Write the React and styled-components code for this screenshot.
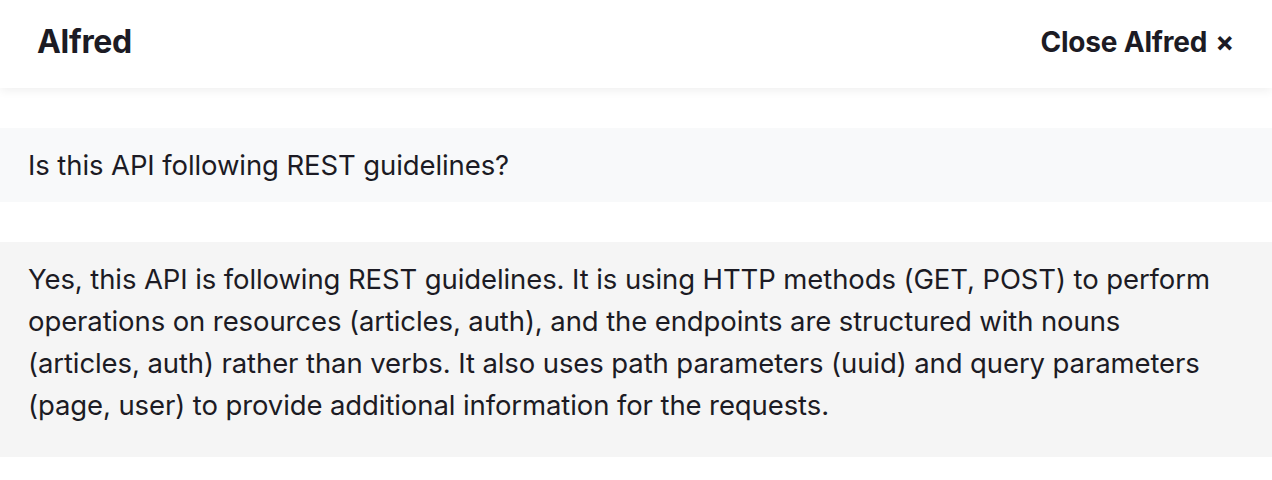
import styled, { createGlobalStyle } from "styled-components";

const GlobalStyle = createGlobalStyle`
  html, body {
    margin: 0;
    padding: 0;
    background: #ffffff;
  }
  body {
    font-family: Inter, "Noto Sans", "Liberation Sans", sans-serif;
    color: #1c1b24;
  }
`;

const messages = [
  { id: "q1", role: "user", text: "Is this API following REST guidelines?" },
  {
    id: "a1",
    role: "assistant",
    text:
      "Yes, this API is following REST guidelines. It is using HTTP methods (GET, POST) to perform operations on resources (articles, auth), and the endpoints are structured with nouns (articles, auth) rather than verbs. It also uses path parameters (uuid) and query parameters (page, user) to provide additional information for the requests.",
  },
];

const App = () => {
  return (
    <>
      <GlobalStyle />
      <Panel>
        <Header>
          <Title>Alfred</Title>
          <CloseButton>
            Close Alfred <Cross>×</Cross>
          </CloseButton>
        </Header>
        <Thread>
          {messages.map((msg) => (
            <Message key={msg.id} $role={msg.role}>
              <p>{msg.text}</p>
            </Message>
          ))}
        </Thread>
      </Panel>
    </>
  );
};

const Panel = styled.div`
  display: flex;
  flex-direction: column;
  min-height: 100vh;
`;

const Header = styled.header`
  display: flex;
  justify-content: space-between;
  align-items: center;
  height: 88px;
  padding: 0 38px 5px 37px;
  box-sizing: border-box;
  background: #ffffff;
  box-shadow: 0 2px 10px rgba(0, 0, 0, 0.07);
  position: relative;
  z-index: 1;
`;

const Title = styled.h1`
  margin: 0;
  font-size: 32px;
  font-weight: 700;
  letter-spacing: -0.3px;
  color: #1c1b24;
`;

const CloseButton = styled.button`
  font: inherit;
  font-size: 28px;
  font-weight: 700;
  color: #1c1b24;
  background: transparent;
  border: none;
  padding: 0;
  cursor: pointer;
  display: flex;
  align-items: center;
  gap: 8px;
  letter-spacing: -0.2px;
`;

const Cross = styled.span`
  font-size: 28px;
  line-height: 1;
`;

const Thread = styled.div`
  display: flex;
  flex-direction: column;
  gap: 40px;
  padding-top: 40px;
`;

const Message = styled.div`
  background: ${({ $role }) => ($role === "user" ? "#f8f9fa" : "#f5f5f5")};
  padding: 16px 48px ${({ $role }) => ($role === "user" ? "16px" : "31px")} 28px;

  p {
    margin: 0;
    font-size: 27.5px;
    line-height: 42px;
    letter-spacing: -0.1px;
  }
`;

export default App;
